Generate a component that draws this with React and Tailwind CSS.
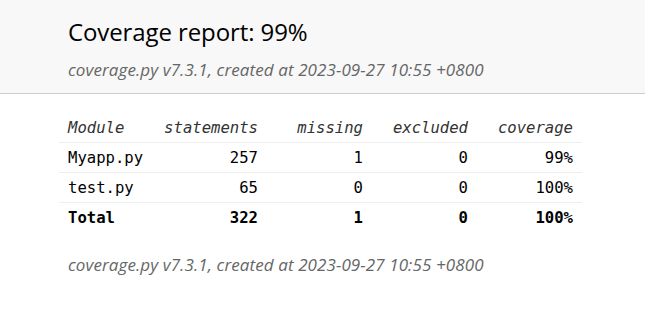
import React from 'react';

const rows = [
  { name: 'Myapp.py', statements: 257, missing: 1, excluded: 0, coverage: '99%' },
  { name: 'test.py', statements: 65, missing: 0, excluded: 0, coverage: '100%' },
];

const total = { name: 'Total', statements: 322, missing: 1, excluded: 0, coverage: '100%' };

const stamp = 'coverage.py v7.3.1, created at 2023-09-27 10:55 +0800';

export default function App() {
  return (
    <div className="min-h-[312px] bg-white font-['Open_Sans',sans-serif]">
      <header className="bg-[#f8f8f8] border-b border-[#ccc] px-[68px] pt-[15px] pb-[12px]">
        <h1 className="text-[24px] leading-[34px] text-black tracking-[-0.1px]">Coverage report: 99%</h1>
        <p className="mt-[9px] text-[17px] leading-[23px] italic text-[#666] tracking-[0.1px]">{stamp}</p>
      </header>
      <main className="px-[59px] pt-[22px]">
        <table className="w-[523px] table-fixed border-collapse font-['DejaVu_Sans_Mono',monospace] text-[15.6px] leading-[20px] text-black">
          <colgroup>
            <col className="w-[103px]" />
            <col className="w-[105px]" />
            <col className="w-[105px]" />
            <col className="w-[105px]" />
            <col className="w-[105px]" />
          </colgroup>
          <thead>
            <tr className="border-b border-[#eee]">
              <th className="text-left font-normal italic text-[#333] pl-[9px] pr-0 pt-[2px] pb-[4px]">Module</th>
              <th className="text-right font-normal italic text-[#333] pl-0 pr-[9px] pt-[2px] pb-[4px]">statements</th>
              <th className="text-right font-normal italic text-[#333] pl-0 pr-[9px] pt-[2px] pb-[4px]">missing</th>
              <th className="text-right font-normal italic text-[#333] pl-0 pr-[9px] pt-[2px] pb-[4px]">excluded</th>
              <th className="text-right font-normal italic text-[#333] pl-0 pr-[9px] pt-[2px] pb-[4px]">coverage</th>
            </tr>
          </thead>
          <tbody>
            {rows.map(r => (
              <tr key={r.name} className="border-b border-[#eee] h-[30px]">
                <td className="text-left px-[9px]">{r.name}</td>
                <td className="text-right px-[9px]">{r.statements}</td>
                <td className="text-right px-[9px]">{r.missing}</td>
                <td className="text-right px-[9px]">{r.excluded}</td>
                <td className="text-right px-[9px]">{r.coverage}</td>
              </tr>
            ))}
            <tr className="h-[30px] font-bold">
              <td className="text-left px-[9px]">{total.name}</td>
              <td className="text-right px-[9px]">{total.statements}</td>
              <td className="text-right px-[9px]">{total.missing}</td>
              <td className="text-right px-[9px]">{total.excluded}</td>
              <td className="text-right px-[9px]">{total.coverage}</td>
            </tr>
          </tbody>
        </table>
        <p className="mt-[20px] px-[9px] text-[17px] leading-[23px] italic text-[#666] tracking-[0.1px]">{stamp}</p>
      </main>
    </div>
  );
}
